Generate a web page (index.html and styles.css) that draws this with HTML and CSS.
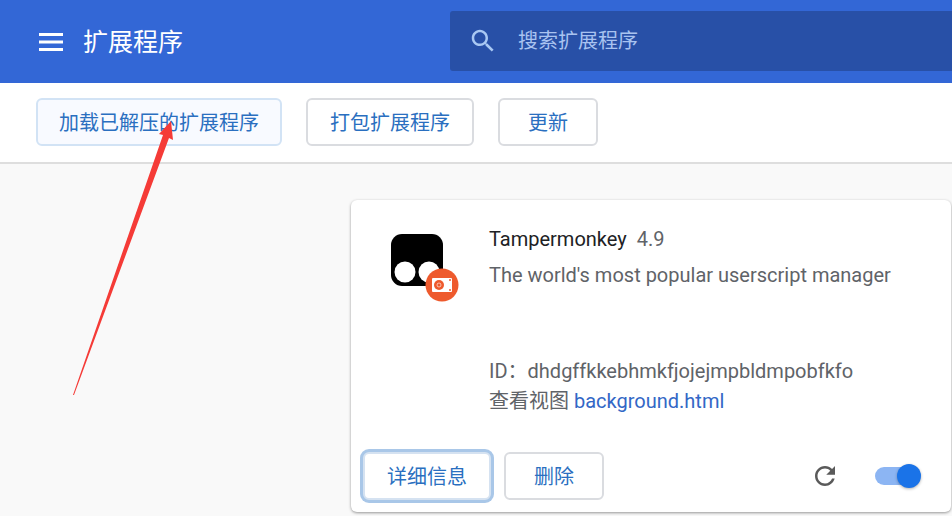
FILE: index.html
```html
<!DOCTYPE html>
<html lang="zh-CN">
<head>
  <meta charset="UTF-8" />
  <meta name="viewport" content="width=device-width, initial-scale=1.0"/>
  <title>扩展程序</title>
  <link rel="stylesheet" href="styles.css">
</head>
<body>
  <header class="header">
    <button class="icon-btn" aria-label="主菜单">
      <svg width="24" height="18" viewBox="0 0 24 18" fill="#fff"><path d="M0 0h24v3H0zM0 7.5h24v3H0zM0 15h24v3H0z"/></svg>
    </button>
    <h1>扩展程序</h1>
    <div class="search">
      <svg width="30" height="30" viewBox="0 0 24 24" fill="#a9c8f3"><path d="M15.5 14h-.79l-.28-.27C15.41 12.59 16 11.11 16 9.5 16 5.91 13.09 3 9.5 3S3 5.91 3 9.5 5.91 16 9.5 16c1.61 0 3.09-.59 4.23-1.57l.27.28v.79l5 4.99L20.49 19l-4.99-5zm-6 0C7.01 14 5 11.99 5 9.5S7.01 5 9.5 5 14 7.01 14 9.5 11.99 14 9.5 14z"/></svg>
      <input type="search" placeholder="搜索扩展程序" aria-label="搜索扩展程序">
    </div>
  </header>

  <div class="toolbar">
    <button class="btn load">加载已解压的扩展程序</button>
    <button class="btn">打包扩展程序</button>
    <button class="btn">更新</button>
  </div>

  <main class="content">
    <article class="card">
      <div class="info">
        <div class="logo">
          <svg width="52" height="52" viewBox="0 0 52 52">
            <rect width="52" height="52" rx="11"/>
            <circle cx="14" cy="38" r="10.5" fill="#fff"/>
            <circle cx="38" cy="38" r="10.5" fill="#fff"/>
          </svg>
          <svg class="badge" width="34" height="34" viewBox="0 0 34 34">
            <circle cx="17" cy="17" r="16.5" fill="#ee5a2d"/>
            <rect x="7" y="10" width="20" height="14" rx="1" fill="#fff"/>
            <circle cx="14" cy="17" r="5" fill="#ee5a2d"/>
            <circle cx="14" cy="17" r="2" fill="none" stroke="#fff" stroke-opacity=".6"/>
            <circle cx="25" cy="12" r="1" fill="#ee5a2d"/>
            <circle cx="25" cy="22" r="1" fill="#ee5a2d"/>
          </svg>
        </div>
        <div class="text">
          <div class="name-row">
            <h2>Tampermonkey</h2>
            <span>4.9</span>
          </div>
          <p class="description">The world's most popular userscript manager</p>
          <p>ID：dhdgffkkebhmkfjojejmpbldmpobfkfo</p>
          <p>查看视图 <a href="#">background.html</a></p>
        </div>
      </div>
      <div class="actions">
        <button class="btn focused">详细信息</button>
        <button class="btn">删除</button>
        <button class="icon-btn reload" aria-label="重新加载">
          <svg width="30" height="30" viewBox="0 0 24 24" fill="#5a5a5a"><path d="M17.65 6.35C16.2 4.9 14.21 4 12 4c-4.42 0-7.99 3.58-7.99 8s3.57 8 7.99 8c3.73 0 6.84-2.55 7.73-6h-2.08c-.82 2.33-3.04 4-5.65 4-3.31 0-6-2.69-6-6s2.69-6 6-6c1.66 0 3.14.69 4.22 1.78L13 11h7V4l-2.35 2.35z"/></svg>
        </button>
        <input class="toggle" type="checkbox" aria-label="启用" checked>
      </div>
    </article>
  </main>

  <!-- pointer to the "load unpacked" button -->
  <svg class="arrow" width="104" height="276" viewBox="0 0 104 276" fill="#f53b37"><path d="M101 1L89 14l4 1L3 275l1 0L99 18l4 2z"/></svg>
</body>
</html>
```
FILE: styles.css
```css
* {
  box-sizing: border-box;
}

body {
  margin: 0;
  position: relative;
  font-family: Roboto, "Noto Sans CJK SC", sans-serif;
  font-size: 20px;
  line-height: 30px;
  color: #5f6368;
  background: #f9f9f9;
}

h1, h2, p {
  margin: 0;
}

button, input {
  font-family: inherit;
  font-size: inherit;
}

/* Header */
.header {
  height: 83px;
  display: flex;
  align-items: center;
  padding-left: 39px;
  background: #3367d6;
}
.header h1 {
  width: 387px;
  padding: 2px 0 0 20px;
  font-size: 25px;
  font-weight: 400;
  color: #fff;
}

.icon-btn {
  display: flex;
  padding: 0;
  border: none;
  background: none;
  cursor: pointer;
}

.search {
  flex: 1;
  height: 60px;
  display: flex;
  align-items: center;
  gap: 20px;
  margin-bottom: 1px;
  padding-left: 18px;
  border-radius: 3px 0 0 3px;
  background: #2850a7;
}
.search input {
  flex: 1;
  min-width: 0;
  padding: 0;
  border: none;
  outline: none;
  background: none;
  color: #fff;
}
.search input::placeholder {
  color: #a9c3f0;
}

/* Toolbar */
.toolbar {
  display: flex;
  gap: 24px;
  padding: 15px 36px 16px;
  border-bottom: 2px solid #dedede;
  background: #fff;
}

.btn {
  min-width: 100px;
  height: 48px;
  padding: 0 22px 2px;
  border: 2px solid #dadce0;
  border-radius: 6px;
  background: #fff;
  color: #2a6fc0;
  white-space: nowrap;
  cursor: pointer;
}
.btn.load {
  width: 246px;
  padding: 0 0 2px;
  border-color: #d2e3f5;
  background: #f8faff;
}
.btn.focused {
  border-color: #d5e2f1;
  box-shadow: 0 0 0 3px #a9c7e8;
}

/* Extension card */
.content {
  display: flex;
  justify-content: flex-end;
  padding: 36px 1px 4px;
}
.card {
  width: 600px;
  border-radius: 6px;
  background: #fff;
  box-shadow: 0 1px 3px rgba(0, 0, 0, 0.4);
}

.info {
  display: flex;
  gap: 46px;
  min-height: 252px;
  padding: 24px 40px 0;
}
.logo {
  position: relative;
  width: 52px;
  padding-top: 10px;
}
.badge {
  position: absolute;
  left: 34px;
  top: 44px;
}

.name-row {
  display: flex;
  gap: 10px;
}
.name-row h2 {
  font-size: 20px;
  font-weight: 400;
  color: #202124;
}
.description {
  min-height: 90px;
  margin: 6px 0;
}
.text a {
  color: #3367c6;
  text-decoration: none;
}

.actions {
  display: flex;
  align-items: center;
  gap: 13px;
  padding: 0 30px 12px 12px;
}
.reload {
  margin-left: auto;
}

.toggle {
  appearance: none;
  position: relative;
  width: 46px;
  height: 24px;
  margin: 0 0 0 22px;
  cursor: pointer;
}
.toggle::before {
  content: "";
  position: absolute;
  left: 0;
  top: 3px;
  width: 40px;
  height: 18px;
  border-radius: 9px;
  background: #8cb5f3;
}
.toggle::after {
  content: "";
  position: absolute;
  right: 0;
  top: 0;
  width: 24px;
  height: 24px;
  border-radius: 50%;
  background: #1a73e8;
  box-shadow: 0 1px 3px rgba(0, 0, 0, 0.3);
}

.arrow {
  position: absolute;
  left: 70px;
  top: 120px;
  pointer-events: none;
}
```
